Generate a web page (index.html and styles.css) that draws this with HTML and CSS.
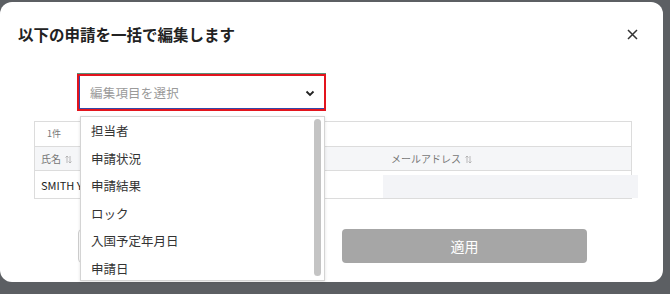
FILE: index.html
```html
<!DOCTYPE html>
<html>
<head>
    <meta charset="UTF-8">
    <title>一括編集</title>
    <link rel="stylesheet" href="styles.css">
</head>
<body>
    <!-- Bulk edit dialog -->
    <div class="modal">
        <div class="modal-header">
            <h2 class="modal-title">以下の申請を一括で編集します</h2>
            <button class="close-button" aria-label="閉じる">
                <svg width="11" height="11" viewBox="0 0 11 11"><path d="M1 1L10 10M10 1L1 10" stroke="#333" stroke-width="1.5" fill="none"/></svg>
            </button>
        </div>

        <div class="modal-body">
            <!-- Field select (open) -->
            <div class="field-select">
                <span class="placeholder">編集項目を選択</span>
                <svg class="chevron" width="10" height="7" viewBox="0 0 10 7"><path d="M1.5 1.5L5 5L8.5 1.5" stroke="#222" stroke-width="1.8" fill="none"/></svg>

                <ul class="options">
                    <li>担当者</li>
                    <li>申請状況</li>
                    <li>申請結果</li>
                    <li>ロック</li>
                    <li>入国予定年月日</li>
                    <li>申請日</li>
                    <span class="scroll-thumb"></span>
                </ul>
            </div>

            <!-- Selected records -->
            <div class="records">
                <div class="records-count">1件</div>
                <div class="records-row records-head">
                    <div class="cell">氏名 <svg class="sort" width="7" height="9" viewBox="0 0 7 9"><path d="M2 8V1M0.5 2.5L2 1L3.5 2.5M5 1V8M3.5 6.5L5 8L6.5 6.5" stroke="#aaa" stroke-width="0.8" fill="none"/></svg></div>
                    <div class="cell">メールアドレス <svg class="sort" width="7" height="9" viewBox="0 0 7 9"><path d="M2 8V1M0.5 2.5L2 1L3.5 2.5M5 1V8M3.5 6.5L5 8L6.5 6.5" stroke="#aaa" stroke-width="0.8" fill="none"/></svg></div>
                </div>
                <div class="records-row records-item">
                    <div class="cell cell-name">SMITH Y</div>
                    <div class="cell"></div>
                </div>
                <span class="loading-bar"></span>
            </div>

            <!-- Cancel sits under the open list -->
            <div class="actions">
                <button class="btn btn-cancel" aria-label="キャンセル"></button>
                <button class="btn btn-apply" disabled>適用</button>
            </div>
        </div>
    </div>
</body>
</html>
```

FILE: styles.css
```css
/* General Styling */
body {
    margin: 0;
    padding-top: 2px;
    height: 294px;
    overflow: hidden;
    box-sizing: border-box;
    background-color: #5c5f63;
    font-family: 'Noto Sans CJK JP', 'Noto Sans', sans-serif;
    color: #333;
}

/* Dialog */
.modal {
    position: relative;
    width: 663px;
    height: 280px;
    background-color: #fff;
    border-radius: 12px;
}

.modal-header {
    display: flex;
    justify-content: space-between;
    align-items: center;
    padding: 22px 25px 0 18px;
    height: 20px;
}

.modal-title {
    margin: 0;
    font-size: 15.5px;
    font-weight: bold;
    line-height: 20px;
    color: #222;
}

.close-button {
    border: none;
    background: none;
    padding: 0;
    width: 11px;
    height: 11px;
    display: flex;
}

.modal-body {
    padding-top: 30px;
}

/* Field Select */
.field-select {
    position: relative;
    margin-left: 77px;
    width: 249px;
    height: 37px;
    box-sizing: border-box;
    border: 2px solid #e3141d;
    box-shadow: inset 1px -1px 0 #3548a8, 0 -1px 0 #5b8f78;
    display: flex;
    align-items: center;
    justify-content: space-between;
    padding: 0 9px 0 11px;
}

.placeholder {
    font-size: 12.5px;
    color: #9a9a9a;
    letter-spacing: 0.2px;
}

.chevron {
    margin-top: 1px;
}

.options {
    position: absolute;
    z-index: 2;
    top: 40px;
    left: 1px;
    width: 245px;
    height: 165px;
    box-sizing: border-box;
    margin: 0;
    padding: 0;
    list-style: none;
    background-color: #fff;
    border: 1px solid #d4d4d4;
    box-shadow: 0 1px 3px rgba(0, 0, 0, 0.12);
}

.options li {
    height: 27.5px;
    line-height: 27.5px;
    padding-left: 10px;
    font-size: 12.5px;
    color: #333;
}

.scroll-thumb {
    position: absolute;
    top: 2px;
    right: 3px;
    width: 7px;
    height: 157px;
    border-radius: 4px;
    background-color: #c4c4c4;
}

/* Records Table */
.records {
    position: relative;
    margin: 10px 0 0 34px;
    width: 598px;
    box-sizing: border-box;
    border: 1px solid #dcdcdc;
}

.records-count {
    height: 24px;
    line-height: 24px;
    padding-left: 12px;
    font-size: 9px;
    color: #777;
    border-bottom: 1px solid #dcdcdc;
}

.records-row {
    display: grid;
    grid-template-columns: 350px 1fr;
}

.records-head {
    height: 23px;
    background-color: #f5f6f8;
    border-bottom: 1px solid #dcdcdc;
    font-size: 10px;
    color: #777;
}

.records-item {
    height: 27px;
    font-size: 11px;
    color: #222;
}

.cell {
    display: flex;
    align-items: center;
    gap: 4px;
    padding-left: 6px;
}

.cell-name {
    white-space: nowrap;
}

.sort {
    margin-top: 1px;
}

.loading-bar {
    position: absolute;
    left: 348px;
    top: 53px;
    width: 255px;
    height: 23px;
    background-color: #f3f4f7;
}

/* Actions */
.actions {
    display: flex;
    gap: 21px;
    margin: 30px 0 0 78px;
}

.btn {
    height: 34px;
    border-radius: 4px;
    font-family: 'Noto Sans CJK JP', 'Noto Sans', sans-serif;
    font-size: 14px;
}

.btn-cancel {
    width: 243px;
    background-color: #fff;
    border: 1px solid #d0d0d0;
}

.btn-apply {
    width: 245px;
    border: none;
    background-color: #a6a6a6;
    color: #fff;
}
```
